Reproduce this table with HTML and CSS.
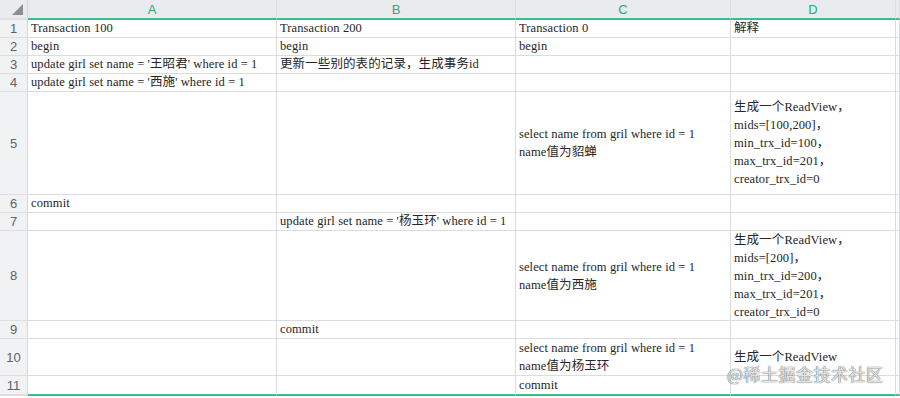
FILE: index.html
```html
<!DOCTYPE html>
<html lang="zh">
<head>
<meta charset="utf-8">
<title>Sheet</title>
<link rel="stylesheet" href="styles.css">
</head>
<body>
<div class="sheet">
  <div class="corner"><span class="tri"></span></div>
  <div class="colhead">A</div>
  <div class="colhead">B</div>
  <div class="colhead">C</div>
  <div class="colhead">D</div>
  <div class="colhead last"></div>

  <div class="rn">1</div>
  <div class="cell">Transaction 100</div>
  <div class="cell">Transaction 200</div>
  <div class="cell">Transaction 0</div>
  <div class="cell">解释</div>
  <div class="cell last"></div>

  <div class="rn">2</div>
  <div class="cell">begin</div>
  <div class="cell">begin</div>
  <div class="cell">begin</div>
  <div class="cell"></div>
  <div class="cell last"></div>

  <div class="rn">3</div>
  <div class="cell">update girl set name = '王昭君' where id = 1</div>
  <div class="cell">更新一些别的表的记录，生成事务id</div>
  <div class="cell"></div>
  <div class="cell"></div>
  <div class="cell last"></div>

  <div class="rn">4</div>
  <div class="cell">update girl set name = '西施' where id = 1</div>
  <div class="cell"></div>
  <div class="cell"></div>
  <div class="cell"></div>
  <div class="cell last"></div>

  <div class="rn">5</div>
  <div class="cell"></div>
  <div class="cell"></div>
  <div class="cell multi">select name from gril where id = 1<br>name值为貂蝉</div>
  <div class="cell multi">生成一个ReadView，<br>mids=[100,200]，<br>min_trx_id=100，<br>max_trx_id=201，<br>creator_trx_id=0</div>
  <div class="cell last"></div>

  <div class="rn">6</div>
  <div class="cell">commit</div>
  <div class="cell"></div>
  <div class="cell"></div>
  <div class="cell"></div>
  <div class="cell last"></div>

  <div class="rn">7</div>
  <div class="cell"></div>
  <div class="cell">update girl set name = '杨玉环' where id = 1</div>
  <div class="cell"></div>
  <div class="cell"></div>
  <div class="cell last"></div>

  <div class="rn">8</div>
  <div class="cell"></div>
  <div class="cell"></div>
  <div class="cell multi">select name from gril where id = 1<br>name值为西施</div>
  <div class="cell multi">生成一个ReadView，<br>mids=[200]，<br>min_trx_id=200，<br>max_trx_id=201，<br>creator_trx_id=0</div>
  <div class="cell last"></div>

  <div class="rn">9</div>
  <div class="cell"></div>
  <div class="cell">commit</div>
  <div class="cell"></div>
  <div class="cell"></div>
  <div class="cell last"></div>

  <div class="rn">10</div>
  <div class="cell"></div>
  <div class="cell"></div>
  <div class="cell multi">select name from gril where id = 1<br>name值为杨玉环</div>
  <div class="cell">生成一个ReadView</div>
  <div class="cell last"></div>

  <div class="rn end">11</div>
  <div class="cell end">&nbsp;</div>
  <div class="cell end"></div>
  <div class="cell end">commit</div>
  <div class="cell end"></div>
  <div class="cell last end"></div>
</div>
<div class="watermark">@稀土掘金技术社区</div>
</body>
</html>
```

FILE: styles.css
```css
* { box-sizing: border-box; }
html, body { margin: 0; padding: 0; background: #ffffff; }
body { width: 900px; height: 398px; overflow: hidden; position: relative; }

.sheet {
  display: grid;
  grid-template-columns: 28px 249px 239px 215px 165px 1fr;
  grid-template-rows: 20px 18px 18px 18px 18px 103px 18px 18px 90px 18px 37px 20px;
  font-family: "Liberation Serif", "Noto Sans CJK SC", serif;
  font-size: 12.5px;
  letter-spacing: 0.1px;
  color: #262626;
}

.corner {
  background: #e9ebee;
  border-right: 1px solid #d4d7dc;
  border-bottom: 2px solid #dfe1e5;
  position: relative;
}
.tri {
  position: absolute;
  right: 4px;
  bottom: 3px;
  width: 0;
  height: 0;
  border-left: 11px solid transparent;
  border-bottom: 11px solid #8a8d91;
}

.colhead {
  background: #e9ebee;
  border-right: 1px solid #dcdee2;
  border-bottom: 2px solid #3dbb8d;
  display: flex;
  align-items: center;
  justify-content: center;
  font-family: "Liberation Sans", Arial, sans-serif;
  font-size: 13px;
  letter-spacing: 0;
  color: #2aaa7a;
  padding-top: 1px;
}

.rn {
  background: #f1f2f4;
  border-right: 1px solid #d4d7dc;
  border-bottom: 1px solid #dcdee2;
  display: flex;
  align-items: center;
  justify-content: center;
  font-family: "Liberation Sans", Arial, sans-serif;
  font-size: 13px;
  letter-spacing: 0;
  color: #5f6267;
}

.cell {
  border-right: 1px solid #dadce0;
  border-bottom: 1px solid #dadce0;
  display: flex;
  align-items: center;
  padding-left: 3px;
  white-space: nowrap;
  overflow: hidden;
  line-height: 17px;
}
.cell.multi { line-height: 18px; }

.cell.end { border-bottom: 2px solid #3dbb8d; }
.rn.end { border-bottom: 2px solid #dcdee2; }

.watermark {
  position: absolute;
  left: 727px;
  top: 363px;
  font-family: "Noto Sans CJK SC", sans-serif;
  font-size: 17px;
  line-height: 22px;
  color: rgba(255, 255, 255, 0.85);
  text-shadow: 0 0 1px rgba(60, 60, 60, 0.9), 0 0 1px rgba(60, 60, 60, 0.6);
  letter-spacing: 0.5px;
}
```
